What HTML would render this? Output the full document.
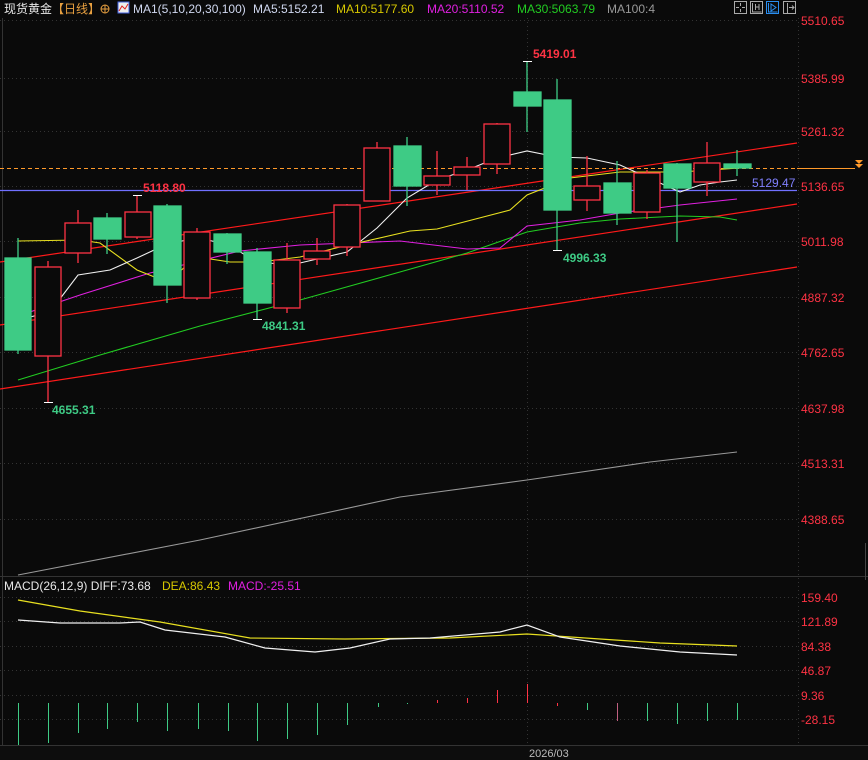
<!DOCTYPE html>
<html><head><meta charset="utf-8"><style>
html,body{margin:0;padding:0;background:#0a0a0a;width:868px;height:760px;overflow:hidden}
svg{display:block}
text{font-family:"Liberation Sans","Noto Sans CJK SC",sans-serif}
</style></head><body>
<svg width="868" height="760" viewBox="0 0 868 760" xmlns="http://www.w3.org/2000/svg">
<rect width="868" height="760" fill="#0a0a0a"/>
<rect x="0" y="745" width="868" height="15" fill="#0d0d0d"/>
<!-- grid -->
<g stroke="#333" stroke-width="1" stroke-dasharray="1,3">
<line x1="0" y1="20.5" x2="798" y2="20.5"/><line x1="0" y1="78.5" x2="798" y2="78.5"/><line x1="0" y1="131.5" x2="798" y2="131.5"/><line x1="0" y1="186.5" x2="798" y2="186.5"/><line x1="0" y1="241.5" x2="798" y2="241.5"/><line x1="0" y1="297.5" x2="798" y2="297.5"/><line x1="0" y1="352.5" x2="798" y2="352.5"/><line x1="0" y1="408.5" x2="798" y2="408.5"/><line x1="0" y1="463.5" x2="798" y2="463.5"/><line x1="0" y1="519.5" x2="798" y2="519.5"/>
<line x1="0" y1="597.5" x2="798" y2="597.5"/><line x1="0" y1="621.5" x2="798" y2="621.5"/><line x1="0" y1="646.5" x2="798" y2="646.5"/><line x1="0" y1="670.5" x2="798" y2="670.5"/><line x1="0" y1="695.5" x2="798" y2="695.5"/><line x1="0" y1="719.5" x2="798" y2="719.5"/>
<line x1="527.5" y1="18" x2="527.5" y2="745"/>
<line x1="798.5" y1="18" x2="798.5" y2="745"/>
</g>
<line x1="0" y1="576.5" x2="868" y2="576.5" stroke="#333"/>
<line x1="0" y1="745.5" x2="868" y2="745.5" stroke="#333"/>
<line x1="2.5" y1="18" x2="2.5" y2="745" stroke="#333"/>
<line x1="865.5" y1="543" x2="865.5" y2="580" stroke="#444"/>
<!-- trend lines -->
<g stroke="#ff1a1a" stroke-width="1.2">
<line x1="0" y1="262" x2="797" y2="143"/>
<line x1="0" y1="325" x2="797" y2="204"/>
<line x1="0" y1="389" x2="797" y2="267"/>
</g>
<line x1="0" y1="168.5" x2="797" y2="168.5" stroke="#ff9a2a" stroke-dasharray="4,3"/>
<line x1="797" y1="168.5" x2="855" y2="168.5" stroke="#ff9a2a"/>
<path d="M855 160 h8 l-4 4 z M855 164 h8 l-4 4 z" fill="#ff9a2a"/>
<line x1="0" y1="190.5" x2="797" y2="190.5" stroke="#7070ff" stroke-width="1.3"/>
<!-- MAs -->
<g fill="none" stroke-width="1.1">
<polyline stroke="#999" points="18,575 200,540 400,497 527,480 650,462 737,452"/>
<polyline stroke="#22cc22" points="18,380 100,355 200,326 300,300 407,270 467,253 527,232 580,223 620,219 680,216 720,217 737,220"/>
<polyline stroke="#e020e0" points="18,316 80,295 150,273 240,251 300,245 400,241 467,249 500,248 527,226 580,220 620,213 680,205 737,199"/>
<polyline stroke="#e8e020" points="18,241 80,240 100,243 137,270 167,282 197,257 230,262 260,262 300,257 340,247 410,231 437,229 510,210 527,195 570,178 620,172 680,172 740,168"/>
<polyline stroke="#f0f0f0" points="18,320 50,312 78,275 110,270 137,258 167,244 197,238 227,244 257,262 280,264 300,263 347,252 377,228 407,198 437,180 467,170 497,158 527,151 557,157 587,158 620,165 660,183 680,192 700,185 720,182 737,180"/>
</g>
<!-- candles -->
<g stroke-width="1.3">
<g stroke="#3ecb85" fill="#3ecb85">
<line x1="18" y1="238" x2="18" y2="354"/><rect x="5" y="258" width="26" height="92"/>
<line x1="107" y1="213" x2="107" y2="254"/><rect x="94" y="218" width="27" height="21"/>
<line x1="167" y1="204" x2="167" y2="303"/><rect x="154" y="206" width="27" height="79"/>
<line x1="227" y1="233" x2="227" y2="264"/><rect x="214" y="234" width="27" height="18"/>
<line x1="257" y1="248" x2="257" y2="320"/><rect x="244" y="252" width="27" height="51"/>
<line x1="407" y1="137" x2="407" y2="206"/><rect x="394" y="146" width="27" height="40"/>
<line x1="527" y1="61" x2="527" y2="132"/><rect x="514" y="92" width="27" height="14"/>
<line x1="557" y1="79" x2="557" y2="250"/><rect x="544" y="100" width="27" height="110"/>
<line x1="617" y1="161" x2="617" y2="225"/><rect x="604" y="183" width="27" height="30"/>
<line x1="677" y1="163" x2="677" y2="242"/><rect x="664" y="164" width="27" height="24"/>
<line x1="737" y1="150" x2="737" y2="176"/><rect x="724" y="164" width="27" height="4"/>
</g>
<g stroke="#ff3344" fill="#0a0a0a">
<line x1="48" y1="261" x2="48" y2="402"/><rect x="35" y="267" width="26" height="89"/>
<line x1="78" y1="210" x2="78" y2="263"/><rect x="65" y="223" width="26" height="30"/>
<line x1="137" y1="195" x2="137" y2="239"/><rect x="125" y="212" width="26" height="25"/>
<line x1="197" y1="228" x2="197" y2="300"/><rect x="184" y="232" width="26" height="66"/>
<line x1="287" y1="243" x2="287" y2="313"/><rect x="274" y="260" width="26" height="48"/>
<line x1="317" y1="238" x2="317" y2="265"/><rect x="304" y="251" width="26" height="8"/>
<line x1="347" y1="204" x2="347" y2="256"/><rect x="334" y="205" width="26" height="42"/>
<line x1="377" y1="142" x2="377" y2="201"/><rect x="364" y="148" width="26" height="53"/>
<line x1="437" y1="151" x2="437" y2="195"/><rect x="424" y="176" width="26" height="9"/>
<line x1="467" y1="157" x2="467" y2="190"/><rect x="454" y="167" width="26" height="8"/>
<line x1="497" y1="123" x2="497" y2="174"/><rect x="484" y="124" width="26" height="40"/>
<line x1="587" y1="156" x2="587" y2="211"/><rect x="574" y="186" width="26" height="14"/>
<line x1="647" y1="170" x2="647" y2="219"/><rect x="634" y="173" width="26" height="39"/>
<line x1="707" y1="142" x2="707" y2="196"/><rect x="694" y="163" width="26" height="19"/>
</g>
</g>
<!-- extreme markers -->
<g stroke="#fff" stroke-width="1"><line x1="523" y1="61.5" x2="532" y2="61.5"/><line x1="44" y1="402.5" x2="53" y2="402.5"/><line x1="553" y1="250.5" x2="562" y2="250.5"/><line x1="253" y1="319.5" x2="262" y2="319.5"/><line x1="133" y1="195.5" x2="142" y2="195.5"/></g>
<g font-size="12" font-weight="bold">
<text x="533" y="58" fill="#ff3344">5419.01</text>
<text x="143" y="192" fill="#ff3344">5118.80</text>
<text x="563" y="262" fill="#3ecb85">4996.33</text>
<text x="262" y="330" fill="#3ecb85">4841.31</text>
<text x="52" y="414" fill="#3ecb85">4655.31</text>
</g>
<text x="752" y="187" font-size="12" fill="#8080ff">5129.47</text>
<!-- axis labels -->
<g font-size="12" fill="#ff3344">
<text x="801" y="25">5510.65</text><text x="801" y="83">5385.99</text><text x="801" y="136">5261.32</text><text x="801" y="191">5136.65</text><text x="801" y="246">5011.98</text><text x="801" y="302">4887.32</text><text x="801" y="357">4762.65</text><text x="801" y="413">4637.98</text><text x="801" y="468">4513.31</text><text x="801" y="524">4388.65</text>
<text x="801" y="602">159.40</text><text x="801" y="626">121.89</text><text x="801" y="651">84.38</text><text x="801" y="675">46.87</text><text x="801" y="700">9.36</text><text x="801" y="724">-28.15</text>
</g>
<!-- header -->
<g font-size="12">
<text x="4" y="13" fill="#e8e8e8">现货黄金</text>
<text x="52" y="13" fill="#e8a040">【日线】</text>
<circle cx="105" cy="9" r="4" fill="none" stroke="#e8a040"/><line x1="101" y1="9" x2="109" y2="9" stroke="#e8a040"/><line x1="105" y1="5" x2="105" y2="13" stroke="#e8a040"/>
<rect x="118" y="2" width="11" height="11" fill="#eee" stroke="#4060e0"/><polyline points="119,11 122,6 125,9 128,4" fill="none" stroke="#e02020"/>
<text x="133" y="13" fill="#d0d8f0">MA1(5,10,20,30,100)</text>
<text x="253" y="13" fill="#d0d8f0">MA5:5152.21</text>
<text x="336" y="13" fill="#d8c800">MA10:5177.60</text>
<text x="427" y="13" fill="#e020e0">MA20:5110.52</text>
<text x="517" y="13" fill="#22cc22">MA30:5063.79</text>
<text x="607" y="13" fill="#999">MA100:4</text>
</g>
<g fill="none" stroke="#aaa">
<rect x="734.5" y="1.5" width="12" height="12"/><path d="M740.5 3v3M740.5 9v3M736 7.5h3M742 7.5h3"/>
<rect x="750.5" y="1.5" width="12" height="12"/><path d="M752.5 3v9h9M755.5 4v6M759 4v6M756 7h3"/>
<rect x="766.5" y="1.5" width="12" height="12" stroke="#2a8ef0"/><path d="M768.5 3v9h9M771 4v7l5-3.5z" stroke="#2a8ef0"/>
<rect x="783.5" y="1.5" width="12" height="12"/><path d="M787.5 3v10M789 7.5h5M792 5.5l2 2-2 2"/>
</g>
<!-- MACD -->
<g font-size="12">
<text x="4" y="590" fill="#e8e8e8">MACD(26,12,9) DIFF:73.68</text>
<text x="162" y="590" fill="#d8c800">DEA:86.43</text>
<text x="228" y="590" fill="#e020e0">MACD:-25.51</text>
</g>
<g fill="none" stroke-width="1.2">
<polyline stroke="#e8e020" points="18,600 80,611 160,622 250,638 345,639 450,638 527,634 600,639 660,643 737,646"/>
<polyline stroke="#f0f0f0" points="18,620 60,623 120,623 140,622 165,630 225,637 265,648 315,652 350,648 390,639 430,638 500,632 527,625 560,637 620,646 680,652 737,655"/>
</g>
<g stroke="#3ecb85" stroke-width="1">
<line x1="18.5" y1="703" x2="18.5" y2="745"/><line x1="48.5" y1="703" x2="48.5" y2="743"/><line x1="78.5" y1="703" x2="78.5" y2="733"/><line x1="107.5" y1="703" x2="107.5" y2="729"/><line x1="137.5" y1="703" x2="137.5" y2="722"/><line x1="167.5" y1="703" x2="167.5" y2="731"/><line x1="198.5" y1="703" x2="198.5" y2="729"/><line x1="228.5" y1="703" x2="228.5" y2="731"/><line x1="257.5" y1="703" x2="257.5" y2="741"/><line x1="287.5" y1="703" x2="287.5" y2="739"/><line x1="317.5" y1="703" x2="317.5" y2="735"/><line x1="347.5" y1="703" x2="347.5" y2="725"/><line x1="378.5" y1="703" x2="378.5" y2="707"/><line x1="407.5" y1="703" x2="407.5" y2="704"/>
<line x1="587.5" y1="703" x2="587.5" y2="710"/><line x1="617.5" y1="703" x2="617.5" y2="721" stroke="#c06080"/><line x1="647.5" y1="703" x2="647.5" y2="721"/><line x1="677.5" y1="703" x2="677.5" y2="724"/><line x1="707.5" y1="703" x2="707.5" y2="721"/><line x1="737.5" y1="703" x2="737.5" y2="720"/>
</g>
<g stroke="#ff3344" stroke-width="1">
<line x1="437.5" y1="703" x2="437.5" y2="700"/><line x1="467.5" y1="703" x2="467.5" y2="698"/><line x1="497.5" y1="703" x2="497.5" y2="690"/><line x1="527.5" y1="703" x2="527.5" y2="684"/><line x1="557.5" y1="703" x2="557.5" y2="706"/>
</g>
<text x="529" y="757" font-size="11" fill="#bbb">2026/03</text>
</svg>
</body></html>
